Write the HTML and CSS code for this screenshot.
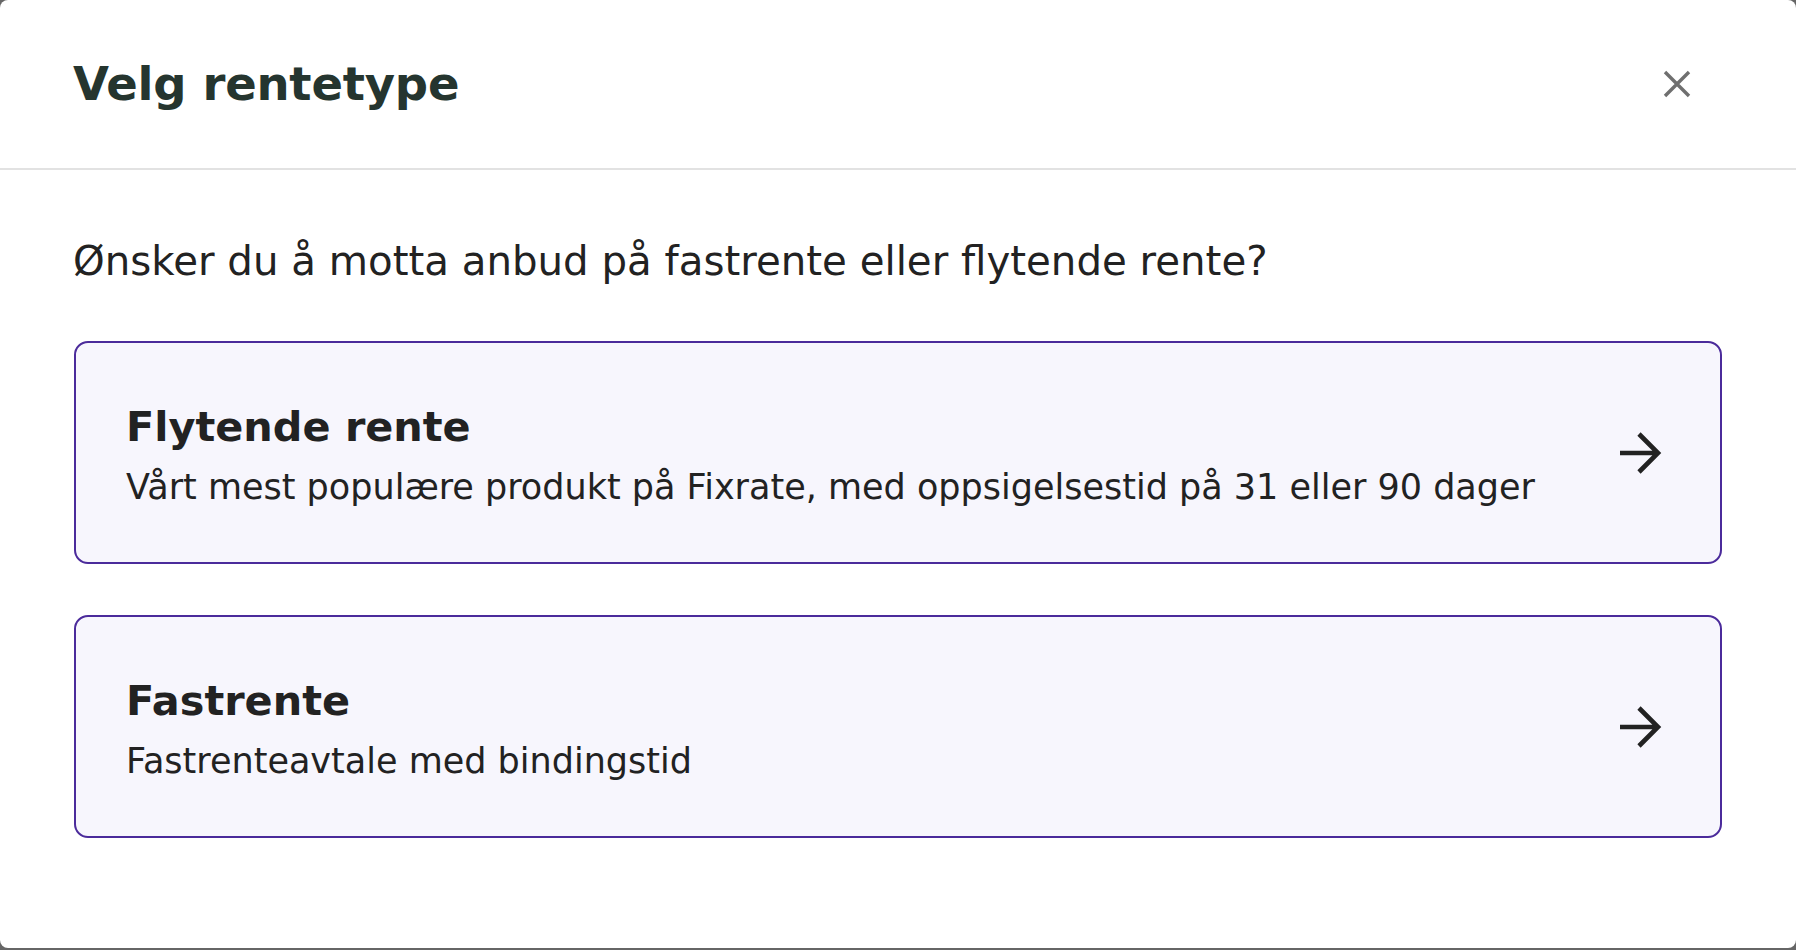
FILE: index.html
```html
<!DOCTYPE html>
<html lang="no">
<head>
<meta charset="utf-8">
<title>Velg rentetype</title>
<link rel="stylesheet" href="styles.css">
</head>
<body>
<div class="dialog">
  <header class="dialog-header">
    <h2 class="dialog-title">Velg rentetype</h2>
    <button class="close-btn" aria-label="Lukk">
      <svg width="28" height="28" viewBox="0 0 28 28"><path d="M2 2 L26 26 M26 2 L2 26" stroke="#6f6f6f" stroke-width="3.4" fill="none"/></svg>
    </button>
  </header>
  <section class="dialog-body">
    <p class="question">Ønsker du å motta anbud på fastrente eller flytende rente?</p>
    <div class="options">
      <button class="option">
        <span class="option-text">
          <span class="option-title">Flytende rente</span>
          <span class="option-sub">Vårt mest populære produkt på Fixrate, med oppsigelsestid på 31 eller 90 dager</span>
        </span>
        <svg class="arrow" width="44" height="44" viewBox="0 0 44 44"><path d="M2 22 H40 M21 3 L40 22 L21 41" stroke="#222222" stroke-width="4.6" fill="none" stroke-linejoin="miter"/></svg>
      </button>
      <button class="option">
        <span class="option-text">
          <span class="option-title">Fastrente</span>
          <span class="option-sub">Fastrenteavtale med bindingstid</span>
        </span>
        <svg class="arrow" width="44" height="44" viewBox="0 0 44 44"><path d="M2 22 H40 M21 3 L40 22 L21 41" stroke="#222222" stroke-width="4.6" fill="none" stroke-linejoin="miter"/></svg>
      </button>
    </div>
  </section>
</div>
</body>
</html>
```
FILE: styles.css
```css
* { box-sizing: border-box; }
html, body { margin: 0; padding: 0; }
body {
  background: #666666;
  width: 1796px;
  height: 950px;
  overflow: hidden;
  font-family: "DejaVu Sans", "Noto Sans", sans-serif;
}
.dialog {
  width: 1796px;
  height: 948px;
  background: #ffffff;
  border-radius: 8px;
  display: flex;
  flex-direction: column;
}
.dialog-header {
  height: 170px;
  border-bottom: 2px solid #e2e2e2;
  display: flex;
  align-items: center;
  justify-content: space-between;
  padding: 0 89px 0 73px;
}
.dialog-title {
  margin: 0;
  font-size: 46.5px;
  line-height: 60px;
  font-weight: 700;
  color: #25352f;
  letter-spacing: -0.2px;
}
.close-btn {
  border: 0;
  background: transparent;
  width: 60px;
  height: 60px;
  padding: 0;
  display: flex;
  align-items: center;
  justify-content: center;
  cursor: pointer;
}
.dialog-body {
  padding: 70px 74px 0 74px;
}
.question {
  margin: 0 0 57px -1px;
  font-size: 40.3px;
  line-height: 44px;
  color: #222222;
}
.options {
  display: flex;
  flex-direction: column;
  gap: 51px;
}
.option {
  height: 223px;
  border: 2px solid #4b2b9b;
  border-radius: 14px;
  background: #f7f6fd;
  display: flex;
  align-items: center;
  justify-content: space-between;
  padding: 0 58px 0 50px;
  text-align: left;
  font-family: inherit;
  cursor: pointer;
}
.option-text {
  display: flex;
  flex-direction: column;
  gap: 16px;
  padding-top: 5px;
}
.option-title {
  font-size: 41.4px;
  line-height: 48px;
  font-weight: 700;
  color: #222222;
}
.option-sub {
  font-size: 35px;
  line-height: 40px;
  color: #222222;
}
.arrow { flex: none; }
```
